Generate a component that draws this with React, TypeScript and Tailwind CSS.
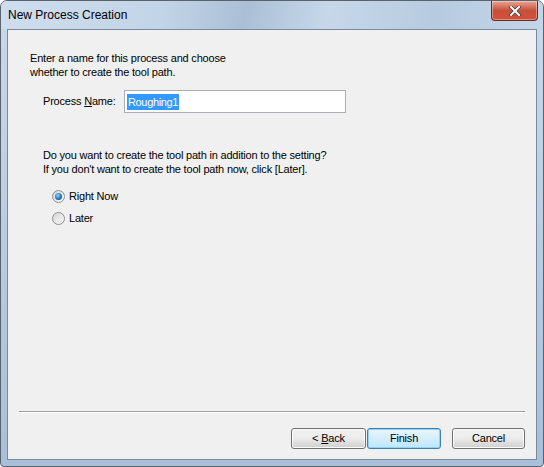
import { useState } from "react";

function Radio({ checked }: { checked: boolean }) {
  return (
    <span className="relative w-[13px] h-[13px] rounded-full border border-[#8e8f8f] bg-gradient-to-br from-[#d4d4d4] to-[#fbfbfb] flex items-center justify-center shrink-0">
      {checked && (
        <span className="w-[7px] h-[7px] rounded-full bg-[radial-gradient(circle_at_40%_35%,#8fd3ff,#1a6fb5_60%,#0d4e86)]" />
      )}
    </span>
  );
}

function WinButton({
  children,
  primary,
}: {
  children: React.ReactNode;
  primary?: boolean;
}) {
  return (
    <button
      className={`h-[21px] rounded-[3px] border text-[11px] tracking-[-0.2px] text-black ${
        primary
          ? "border-[#3c7fb1] bg-gradient-to-b from-[#eaf6fd] to-[#bee6fd] shadow-[inset_0_0_0_1px_#8fd3f9]"
          : "border-[#707070] bg-gradient-to-b from-[#f2f2f2] via-[#ebebeb] to-[#cfcfcf] shadow-[inset_0_0_0_1px_#fcfcfc]"
      }`}
    >
      {children}
    </button>
  );
}

export default function App() {
  const [mode, setMode] = useState<"now" | "later">("now");

  return (
    <div
      className="w-[544px] h-[467px] flex flex-col bg-white"
      style={{ fontFamily: '"Liberation Sans", Arial, sans-serif' }}
    >
      <div className="flex-1 flex flex-col rounded-t-[7px] rounded-b-[4px] border border-[#59626d] bg-gradient-to-b from-[#c9d9ea] via-[#b9cde2] to-[#a7bfd8] overflow-hidden">
        {/* Title bar */}
        <div className="h-[28px] flex items-start justify-between bg-[linear-gradient(100deg,#cfdeee_0%,#c2d4e7_30%,#aabfd6_45%,#c6d7e9_60%,#b7cbe0_80%,#c4d5e8_100%)]">
          <span className="pl-[7px] pt-[8px] text-[12px] leading-none text-black">
            New Process Creation
          </span>
          <div className="mr-[5px] w-[47px] h-[20px] rounded-b-[4px] border border-t-0 border-[#6b2b25] bg-gradient-to-b from-[#e8a593] via-[#c7503a] to-[#d2513a] flex items-center justify-center shadow-[inset_0_0_0_1px_rgba(255,255,255,0.35)]">
            <svg width="12" height="10" viewBox="0 0 12 10">
              <path
                d="M2 1 L10 9 M10 1 L2 9"
                stroke="#3a3a3a"
                strokeWidth="3.4"
                strokeLinecap="square"
              />
              <path
                d="M2 1 L10 9 M10 1 L2 9"
                stroke="#ffffff"
                strokeWidth="2"
                strokeLinecap="square"
              />
            </svg>
          </div>
        </div>

        {/* Client area */}
        <div className="flex-1 mx-[6px] mb-[6px] border border-[#7a8a9c] bg-[#f0f0f0] flex flex-col text-[11px] tracking-[-0.2px] text-black">
          <div className="flex-1 pl-[22px] pt-[21px]">
            <p className="leading-[14px]">
              Enter a name for this process and choose
              <br />
              whether to create the tool path.
            </p>

            <div className="mt-[11px] pl-[13px] flex items-center">
              <span className="w-[81px]">
                Process <span className="underline">N</span>ame:
              </span>
              <div className="w-[222px] h-[23px] border border-[#abadb3] bg-white flex items-center pl-[2px]">
                <span className="bg-[#3399ff] text-white px-[1px] leading-[16px] tracking-[-0.35px]">
                  Roughing1
                </span>
              </div>
            </div>

            <p className="mt-[35px] pl-[13px] leading-[14px]">
              Do you want to create the tool path in addition to the setting?
              <br />
              If you don't want to create the tool path now, click [Later].
            </p>

            <div className="mt-[13px] pl-[22px] flex flex-col gap-[8px]">
              <label
                className="flex items-center gap-[4px] h-[14px]"
                onClick={() => setMode("now")}
              >
                <Radio checked={mode === "now"} />
                <span>Right Now</span>
              </label>
              <label
                className="flex items-center gap-[4px] h-[14px]"
                onClick={() => setMode("later")}
              >
                <Radio checked={mode === "later"} />
                <span>Later</span>
              </label>
            </div>
          </div>

          <div className="mx-[11px] h-[2px] border-t border-[#a0a0a0] border-b border-b-white" />

          <div className="h-[46px] flex items-start justify-end pr-[11px] pt-[15px]">
            <div className="flex">
              <div className="w-[75px]">
                <WinButton>
                  <span className="inline-block w-[73px]">
                    &lt; <span className="underline">B</span>ack
                  </span>
                </WinButton>
              </div>
              <div className="w-[74px] ml-[1px]">
                <WinButton primary>
                  <span className="inline-block w-[72px]">Finish</span>
                </WinButton>
              </div>
              <div className="w-[73px] ml-[11px]">
                <WinButton>
                  <span className="inline-block w-[71px]">Cancel</span>
                </WinButton>
              </div>
            </div>
          </div>
        </div>
      </div>
    </div>
  );
}
